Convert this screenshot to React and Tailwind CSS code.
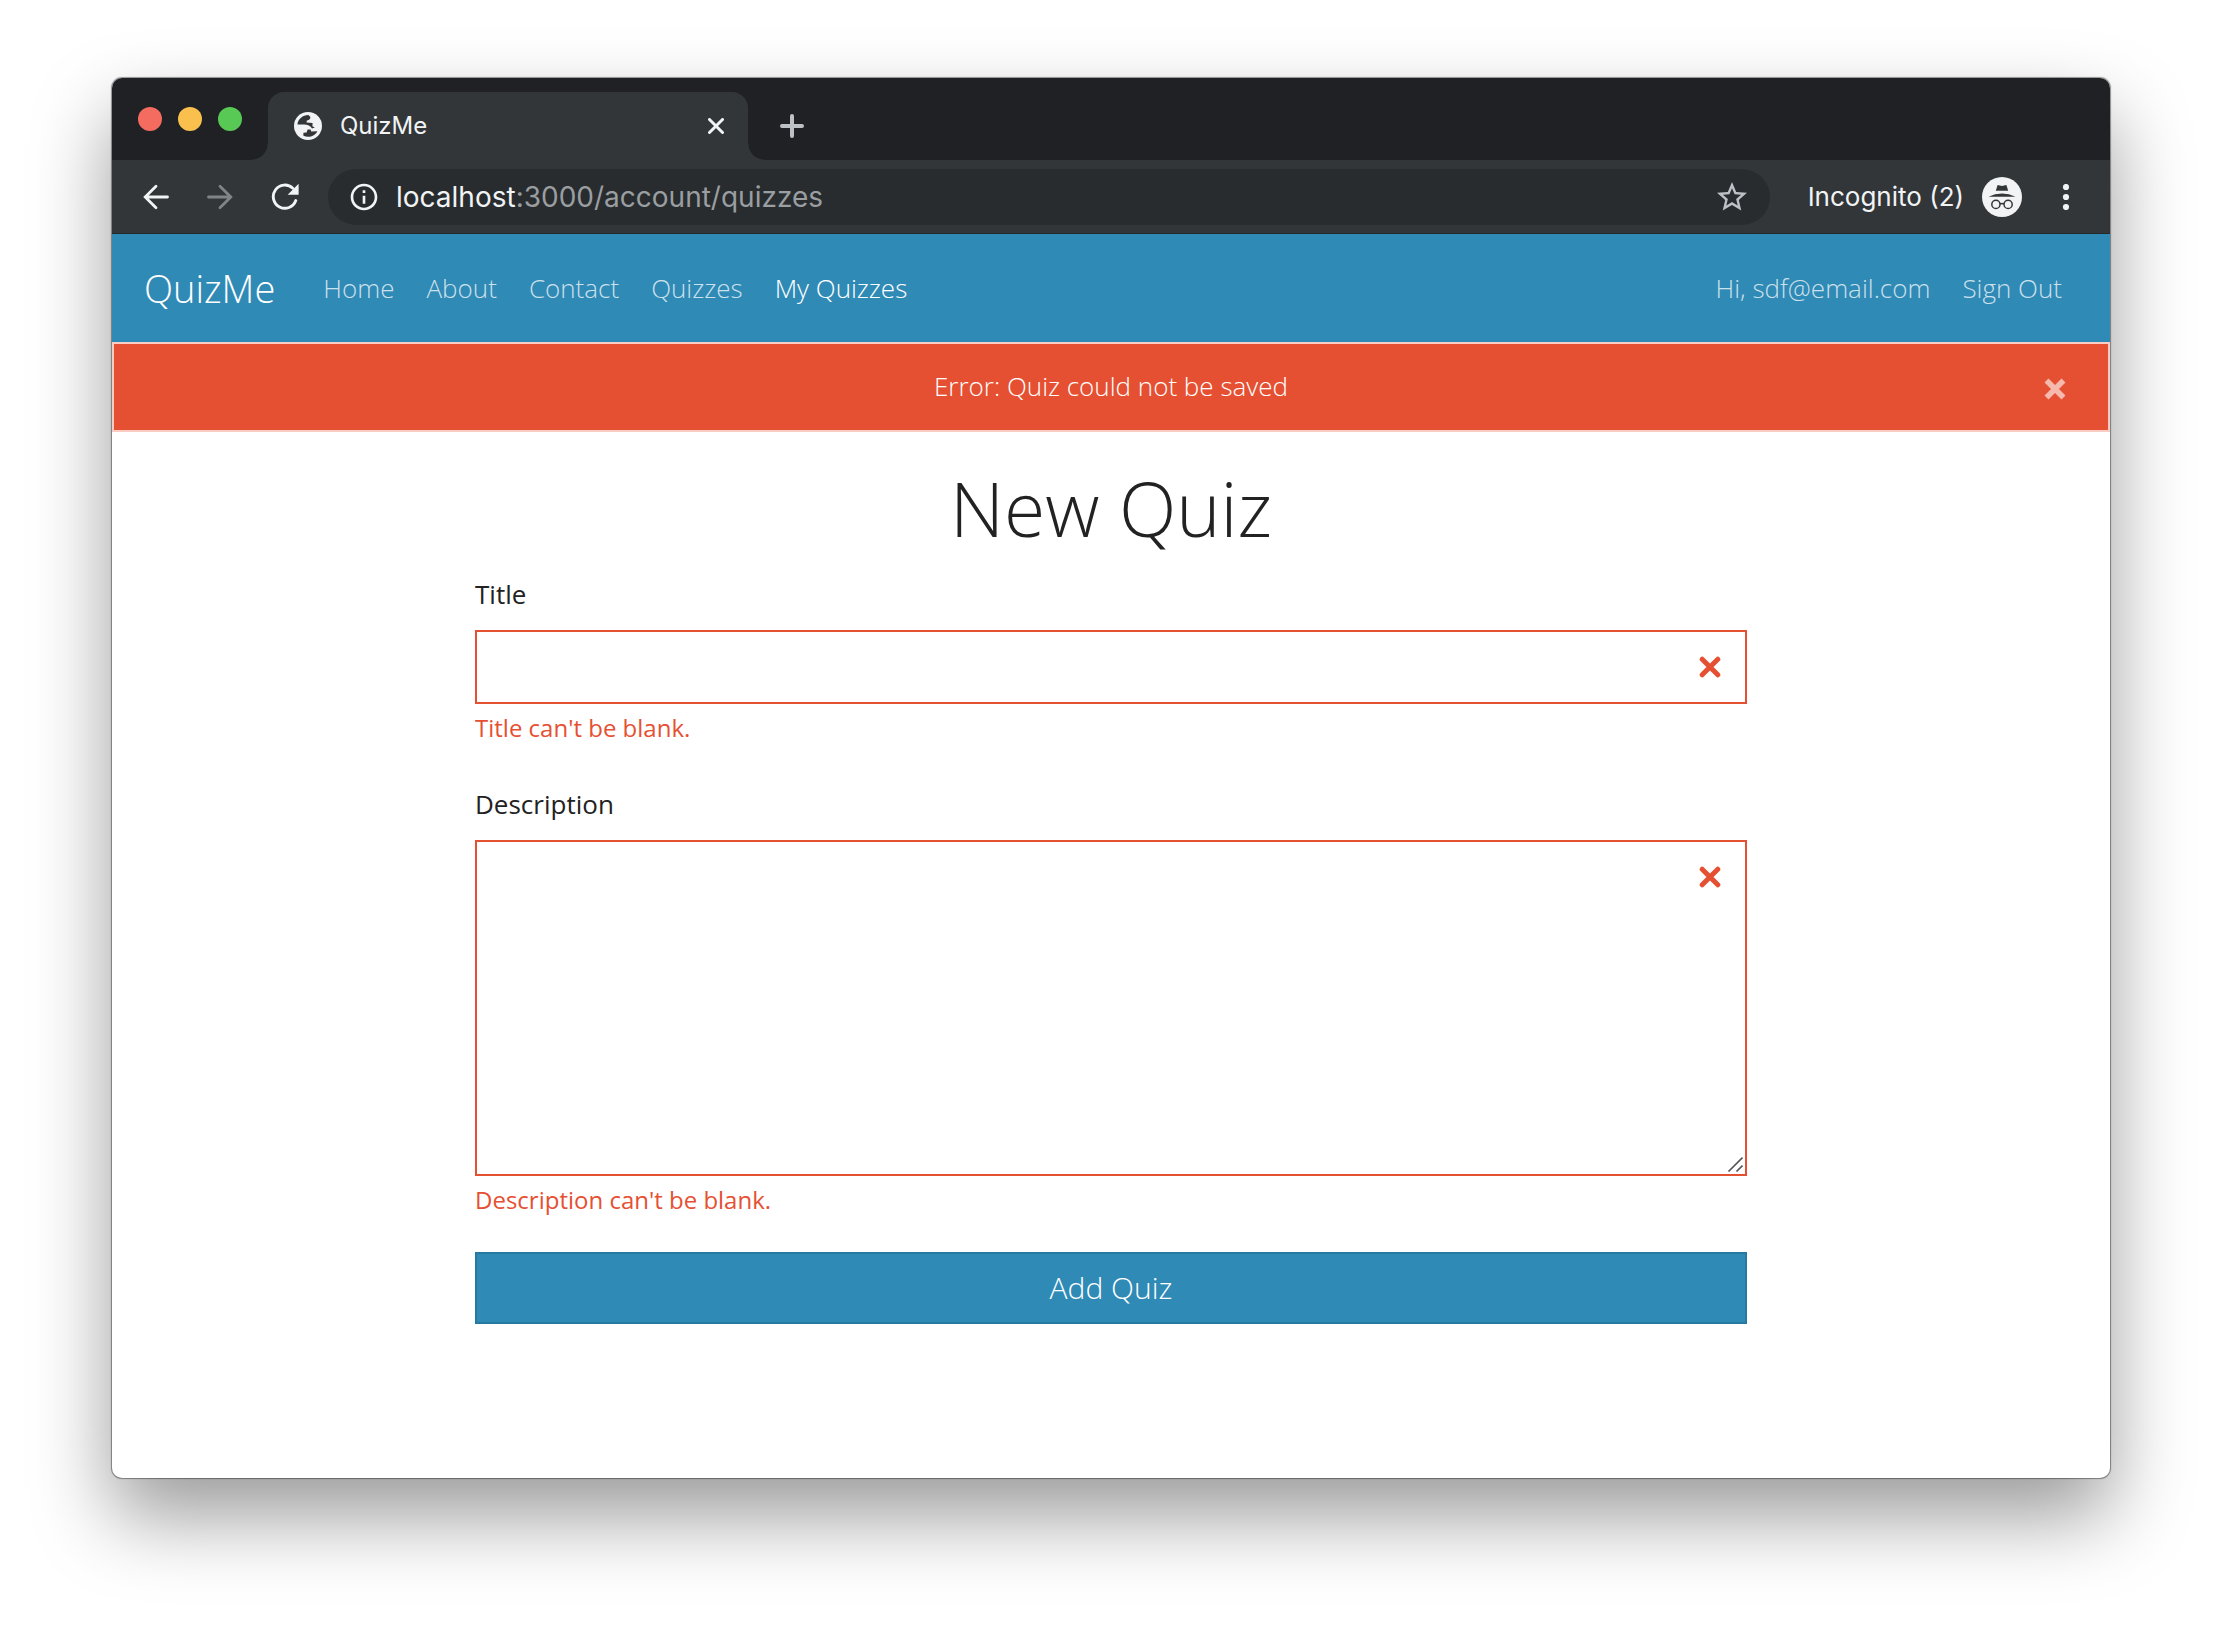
import React from "react";
import { MdInfoOutline, MdStarBorder } from "react-icons/md";

function ArrowIcon({ className }) {
  return (
    <svg viewBox="0 0 26 26" className={className} fill="none" stroke="currentColor" strokeWidth="2.8" strokeLinecap="round" strokeLinejoin="miter">
      <path d="M24.5 13H3M13 2.2L2.2 13L13 23.8" />
    </svg>
  );
}

function ReloadIcon() {
  return (
    <svg viewBox="0 0 28 28" className="size-7" aria-hidden="true">
      <path d="M21.8 5.2A11.6 11.6 0 1 0 24.8 17.6" fill="none" stroke="currentColor" strokeWidth="2.9" strokeLinecap="round" />
      <path d="M27.6 0.8V11.8H16.6Z" fill="currentColor" />
    </svg>
  );
}

function GlobeIcon() {
  return (
    <svg viewBox="0 0 28 28" className="size-7 shrink-0" aria-hidden="true">
      <circle cx="14" cy="14" r="14" fill="#f1f3f4" />
      <g fill="#323639">
        <path d="M3.4 12.4C4.2 7 8.6 3.2 14.4 3.1L16.4 4.9C16.6 7.2 14.6 8.2 12.8 8.4L12.6 10.6L18.6 11L18.4 14.2L20.8 15.6L18 16.6C16.6 13.6 13.6 12.6 10.2 12.4Z" />
        <path d="M9.4 23.8V20.8L12.6 20.4L13.6 17.6H16.6L17.2 19.6L23.4 19.2C21.2 23.6 15.2 26.4 9.4 23.8Z" />
      </g>
    </svg>
  );
}

function IncognitoIcon() {
  return (
    <svg viewBox="0 0 40 40" className="size-10 shrink-0" aria-hidden="true">
      <circle cx="20" cy="20" r="20" fill="#f1f3f4" />
      <path d="M15.6 8L20 9L24.4 8L26.2 13.8H13.8Z" fill="#323639" />
      <path d="M6.5 19.8Q13 16.6 20 16.6T33.5 19.8Z" fill="#323639" />
      <g fill="none" stroke="#323639" strokeWidth="1.5">
        <circle cx="13.9" cy="27.4" r="4.1" />
        <circle cx="26.1" cy="27.4" r="4.1" />
        <path d="M18 27Q20 25.8 22 27" />
      </g>
    </svg>
  );
}

function TabStrip() {
  return (
    <div className="flex h-[82px] items-end bg-[#202124]">
      <div className="flex h-full w-[156px] shrink-0 items-center gap-4 pl-[26px]">
        <button aria-label="Close window" className="size-6 rounded-full bg-[#f46b60]" />
        <button aria-label="Minimize window" className="size-6 rounded-full bg-[#fac04d]" />
        <button aria-label="Zoom window" className="size-6 rounded-full bg-[#59c955]" />
      </div>
      <div className="relative flex h-[68px] w-[480px] items-center rounded-t-2xl bg-[#323639] pr-6 pl-[26px]">
        <span className="absolute bottom-0 -left-4 size-4 bg-[radial-gradient(circle_at_0_0,#202124_15px,#323639_16px)]" />
        <span className="absolute -right-4 bottom-0 size-4 bg-[radial-gradient(circle_at_100%_0,#202124_15px,#323639_16px)]" />
        <GlobeIcon />
        <span className="ml-[18px] flex-1 text-2xl text-[#f1f3f4]">QuizMe</span>
        <button aria-label="Close tab" className="text-[#f1f3f4]">
          <svg viewBox="0 0 16 16" className="size-4" stroke="currentColor" strokeWidth="3" strokeLinecap="round">
            <path d="M1.5 1.5L14.5 14.5M14.5 1.5L1.5 14.5" />
          </svg>
        </button>
      </div>
      <button aria-label="New tab" className="flex h-[68px] items-center pl-8 text-[#bdc1c6]">
        <svg viewBox="0 0 24 24" className="size-6" stroke="currentColor" strokeWidth="4" strokeLinecap="round">
          <path d="M12 2V22M2 12H22" />
        </svg>
      </button>
    </div>
  );
}

function Toolbar() {
  return (
    <div className="flex h-[74px] items-center border-b border-[#26292b] bg-[#323639] pl-[31px] text-[#f1f3f4]">
      <button aria-label="Back">
        <ArrowIcon className="size-[26px]" />
      </button>
      <button aria-label="Forward" className="ml-[38px] text-[#808486]">
        <ArrowIcon className="size-[26px] rotate-180" />
      </button>
      <button aria-label="Reload" className="ml-[38px]">
        <ReloadIcon />
      </button>
      <div className="ml-[29px] flex h-14 flex-1 items-center rounded-full bg-[#282c2f] px-5">
        <MdInfoOutline className="size-8 shrink-0" />
        <span className="ml-4 flex-1 text-[28px]">
          localhost<span className="text-[#9a9ea1]">:3000/account/quizzes</span>
        </span>
        <button aria-label="Bookmark this page" className="text-[#bdc1c6]">
          <MdStarBorder className="size-9" />
        </button>
      </div>
      <span className="ml-[38px] text-[26px]">Incognito (2)</span>
      <span className="ml-[18px]">
        <IncognitoIcon />
      </span>
      <button aria-label="Menu" className="mr-10 ml-10">
        <svg viewBox="0 0 8 26" className="h-[26px] w-2" fill="currentColor">
          <circle cx="4" cy="3" r="3.1" />
          <circle cx="4" cy="13" r="3.1" />
          <circle cx="4" cy="23" r="3.1" />
        </svg>
      </button>
    </div>
  );
}

const links = ["Home", "About", "Contact", "Quizzes"];

function NavBar() {
  return (
    <nav className="flex h-[108px] items-center bg-[#2f8ab6] pr-12 pl-8 text-[26px] font-light text-white/75">
      <a href="#" className="mr-12 text-[38px] text-white">QuizMe</a>
      <div className="flex flex-1 gap-8">
        {links.map((label) => (
          <a key={label} href="#">{label}</a>
        ))}
        <a href="#" className="text-white">My Quizzes</a>
      </div>
      <div className="flex gap-8">
        <span>Hi, sdf@email.com</span>
        <a href="#">Sign Out</a>
      </div>
    </nav>
  );
}

function Alert() {
  return (
    <div role="alert" className="relative flex h-[90px] items-center justify-center border-2 border-[#f9cdc3] bg-[#e65032] pb-0.5 text-[26px] font-light text-white">
      Error: Quiz could not be saved
      <button aria-label="Dismiss" className="absolute top-[34px] right-[42px] text-[#f5b9ad]">
        <svg viewBox="0 0 22 22" className="size-[22px]" stroke="currentColor" strokeWidth="5.6" strokeLinecap="butt">
          <path d="M2.5 2.5L19.5 19.5M19.5 2.5L2.5 19.5" />
        </svg>
      </button>
    </div>
  );
}

function InvalidMark() {
  return (
    <svg viewBox="0 0 22 22" className="pointer-events-none absolute top-[26px] right-[26px] size-[22px] text-[#e65032]" stroke="currentColor" strokeWidth="5" strokeLinecap="round" aria-hidden="true">
      <path d="M3.2 3.2L18.8 18.8M18.8 3.2L3.2 18.8" />
    </svg>
  );
}

function QuizForm() {
  return (
    <form className="mx-auto w-full max-w-[1272px] pb-[154px] text-[26px] text-[#222]">
      <h1 className="pt-6 text-center text-[75px] leading-[104px] font-light">New Quiz</h1>
      <label htmlFor="title" className="mt-3.5 block leading-10">Title</label>
      <div className="relative mt-4">
        <input id="title" type="text" className="block h-[74px] w-full border-2 border-[#e65032] px-6 outline-none" />
        <InvalidMark />
      </div>
      <p className="mt-1.5 text-2xl leading-9 text-[#e65032]">Title can't be blank.</p>
      <label htmlFor="description" className="mt-[38px] block leading-10">Description</label>
      <div className="relative mt-4">
        <textarea id="description" className="block h-[336px] w-full resize-none border-2 border-[#e65032] px-6 py-4 outline-none" />
        <InvalidMark />
        <svg viewBox="0 0 16 16" className="pointer-events-none absolute right-1 bottom-1 size-4 text-[#555]" stroke="currentColor" strokeWidth="1.6" aria-hidden="true">
          <path d="M1.5 15.5L15.5 1.5M9.5 15.5L15.5 9.5" />
        </svg>
      </div>
      <p className="mt-1.5 text-2xl leading-9 text-[#e65032]">Description can't be blank.</p>
      <button type="button" className="mt-[34px] flex h-[72px] w-full items-center justify-center border-2 border-[#2679a1] bg-[#2f8ab6] pb-0.5 text-[30px] font-light text-white">
        Add Quiz
      </button>
    </form>
  );
}

export default function App() {
  return (
    <div className="min-h-screen bg-white px-28 pt-[78px] pb-[148px] font-['Inter',sans-serif]">
      <div className="overflow-hidden rounded-[10px] bg-white shadow-[0_0_1px_1px_rgba(0,0,0,0.4),0_38px_80px_rgba(0,0,0,0.4)]">
        <TabStrip />
        <Toolbar />
        <main className="font-['Open_Sans',sans-serif]">
          <NavBar />
          <Alert />
          <QuizForm />
        </main>
      </div>
    </div>
  );
}
